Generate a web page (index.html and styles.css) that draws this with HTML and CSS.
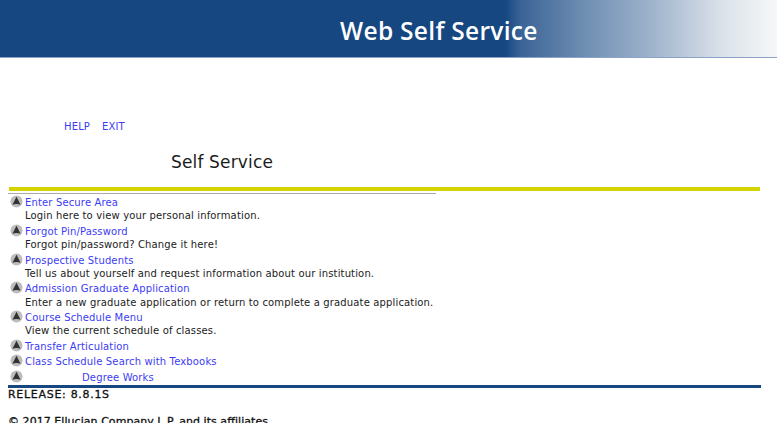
FILE: index.html
```html
<!DOCTYPE html>
<html lang="en">
  <head>
    <meta charset="UTF-8" />
    <title>Web Self Service</title>
    <link rel="stylesheet" href="styles.css">
  </head>
  <body>
    <div class="banner">
      <span class="banner-title">Web Self Service</span>
    </div>
    <div class="toplinks">
      <a href="#">HELP</a>
      <a href="#">EXIT</a>
    </div>
    <h1 class="page-title">Self Service</h1>
    <div class="yellow-bar"></div>
    <div class="grey-line"></div>
    <div class="menu">
      <div class="item">
        <svg class="bullet" viewBox="0 0 14 14"><circle cx="7" cy="7" r="6.5" fill="#bdbdbd"/><path d="M7 2 L11.4 10.4 Q7 8.8 2.6 10.4 Z" fill="#333"/></svg>
        <div><a href="#">Enter Secure Area</a><p>Login here to view your personal information.</p></div>
      </div>
      <div class="item">
        <svg class="bullet" viewBox="0 0 14 14"><circle cx="7" cy="7" r="6.5" fill="#bdbdbd"/><path d="M7 2 L11.4 10.4 Q7 8.8 2.6 10.4 Z" fill="#333"/></svg>
        <div><a href="#">Forgot Pin/Password</a><p>Forgot pin/password? Change it here!</p></div>
      </div>
      <div class="item">
        <svg class="bullet" viewBox="0 0 14 14"><circle cx="7" cy="7" r="6.5" fill="#bdbdbd"/><path d="M7 2 L11.4 10.4 Q7 8.8 2.6 10.4 Z" fill="#333"/></svg>
        <div><a href="#">Prospective Students</a><p>Tell us about yourself and request information about our institution.</p></div>
      </div>
      <div class="item">
        <svg class="bullet" viewBox="0 0 14 14"><circle cx="7" cy="7" r="6.5" fill="#bdbdbd"/><path d="M7 2 L11.4 10.4 Q7 8.8 2.6 10.4 Z" fill="#333"/></svg>
        <div><a href="#">Admission Graduate Application</a><p>Enter a new graduate application or return to complete a graduate application.</p></div>
      </div>
      <div class="item">
        <svg class="bullet" viewBox="0 0 14 14"><circle cx="7" cy="7" r="6.5" fill="#bdbdbd"/><path d="M7 2 L11.4 10.4 Q7 8.8 2.6 10.4 Z" fill="#333"/></svg>
        <div><a href="#">Course Schedule Menu</a><p>View the current schedule of classes.</p></div>
      </div>
      <div class="item">
        <svg class="bullet" viewBox="0 0 14 14"><circle cx="7" cy="7" r="6.5" fill="#bdbdbd"/><path d="M7 2 L11.4 10.4 Q7 8.8 2.6 10.4 Z" fill="#333"/></svg>
        <div><a href="#">Transfer Articulation</a></div>
      </div>
      <div class="item">
        <svg class="bullet" viewBox="0 0 14 14"><circle cx="7" cy="7" r="6.5" fill="#bdbdbd"/><path d="M7 2 L11.4 10.4 Q7 8.8 2.6 10.4 Z" fill="#333"/></svg>
        <div><a href="#">Class Schedule Search with Texbooks</a></div>
      </div>
      <div class="item">
        <svg class="bullet" viewBox="0 0 14 14"><circle cx="7" cy="7" r="6.5" fill="#bdbdbd"/><path d="M7 2 L11.4 10.4 Q7 8.8 2.6 10.4 Z" fill="#333"/></svg>
        <div class="indented"><a href="#">Degree Works</a></div>
      </div>
    </div>
    <div class="blue-line"></div>
    <div class="release">RELEASE: 8.8.1S</div>
    <div class="copyright">© 2017 Ellucian Company L.P. and its affiliates.</div>
  </body>
</html>
```

FILE: styles.css
```css
html,
body {
  height: 423px;
  overflow: hidden;
}
body {
  margin: 0;
  padding: 0;
  background: #fff;
  font-family: "DejaVu Sans", sans-serif;
  font-size: 10px;
  letter-spacing: 0.15px;
  color: #222;
}
a {
  color: #3c3cf5;
  text-decoration: none;
}
.banner {
  height: 57px;
  background: linear-gradient(
    90deg,
    #164781 0%,
    #164781 65%,
    #3a6497 67%,
    #6b8bb0 74.6%,
    #9db2cb 83.6%,
    #dbe2ea 93%,
    #f6f7f8 100%
  );
  display: flex;
  align-items: center;
  padding-left: 340px;
  margin-bottom: 1px;
  box-shadow: 0 1px 0 #8aa3c6;
}
.banner-title {
  font-family: "Open Sans", sans-serif;
  font-weight: 600;
  font-size: 24.5px;
  letter-spacing: 0.3px;
  color: #fff;
  padding-top: 3px;
}
.toplinks {
  margin-top: 63px;
  padding-left: 64px;
  display: flex;
  gap: 12px;
  line-height: 13px;
}
.page-title {
  margin: 18px 0 0 171px;
  font-size: 17px;
  letter-spacing: 0.15px;
  font-weight: normal;
  line-height: 22px;
  color: #1c1c1c;
}
.yellow-bar {
  margin: 14px 0 0 9px;
  width: 751px;
  height: 4px;
  background: #d3d300;
}
.grey-line {
  margin: 2px 0 0 8px;
  width: 428px;
  height: 1px;
  background: #aaa;
}
.menu {
  margin: 2px 0 0 10px;
}
.item {
  display: flex;
  gap: 2px;
  margin-bottom: 2.25px;
}
.item p {
  margin: 0;
  line-height: 13.25px;
}
.item a {
  display: block;
  line-height: 13.25px;
}
.bullet {
  width: 13px;
  height: 13px;
  flex: none;
  margin-top: -1px;
}
.indented {
  padding-left: 57px;
}
.blue-line {
  margin: -1px 0 0 8px;
  width: 753px;
  height: 3px;
  background: #164781;
}
.release {
  margin: 0 0 0 8px;
  font-size: 11px;
  letter-spacing: 0.7px;
  line-height: 13px;
  color: #111;
  -webkit-text-stroke: 0.3px #111;
}
.copyright {
  margin: 14px 0 0 8px;
  font-size: 11px;
  letter-spacing: 0.05px;
  line-height: 13px;
  color: #111;
  -webkit-text-stroke: 0.3px #111;
}
```
